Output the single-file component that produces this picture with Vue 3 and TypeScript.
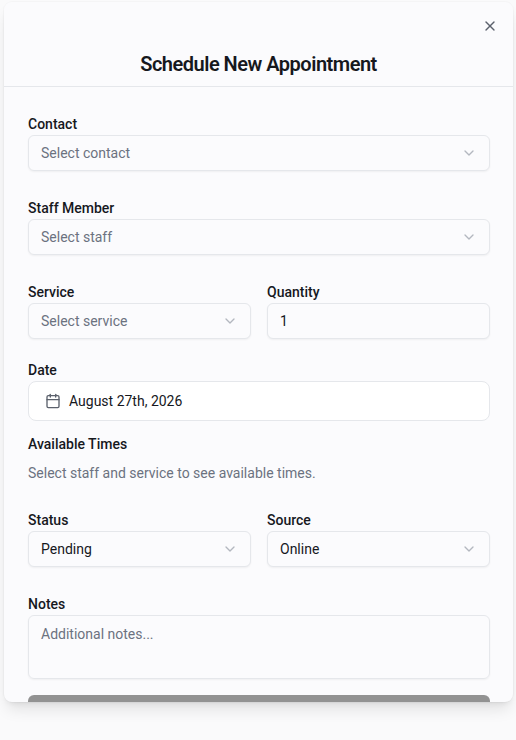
<script setup lang="ts">
interface Field { label: string; value: string; placeholder?: boolean; kind: 'select' | 'input' }
const row1: Field[] = [
  { label: 'Service', value: 'Select service', placeholder: true, kind: 'select' },
  { label: 'Quantity', value: '1', kind: 'input' },
]
const row2: Field[] = [
  { label: 'Status', value: 'Pending', kind: 'select' },
  { label: 'Source', value: 'Online', kind: 'select' },
]
const single: Field[] = [
  { label: 'Contact', value: 'Select contact', placeholder: true, kind: 'select' },
  { label: 'Staff Member', value: 'Select staff', placeholder: true, kind: 'select' },
]
</script>

<template>
  <div class="page">
    <div class="modal">
      <header class="head">
        <button class="close" aria-label="Close">
          <svg width="16" height="16" viewBox="0 0 24 24" fill="none" stroke="currentColor" stroke-width="2" stroke-linecap="round" stroke-linejoin="round"><path d="M18 6 6 18" /><path d="m6 6 12 12" /></svg>
        </button>
        <h2>Schedule New Appointment</h2>
      </header>
      <div class="body">
        <div v-for="f in single" :key="f.label" class="field block">
          <label>{{ f.label }}</label>
          <div class="control">
            <span :class="{ ph: f.placeholder }">{{ f.value }}</span>
            <svg class="chev" width="16" height="16" viewBox="0 0 24 24" fill="none" stroke="currentColor" stroke-width="2" stroke-linecap="round" stroke-linejoin="round"><path d="m6 9 6 6 6-6" /></svg>
          </div>
        </div>
        <div class="two block-tight">
          <div v-for="f in row1" :key="f.label" class="field">
            <label>{{ f.label }}</label>
            <div class="control">
              <span :class="{ ph: f.placeholder }">{{ f.value }}</span>
              <svg v-if="f.kind === 'select'" class="chev" width="16" height="16" viewBox="0 0 24 24" fill="none" stroke="currentColor" stroke-width="2" stroke-linecap="round" stroke-linejoin="round"><path d="m6 9 6 6 6-6" /></svg>
            </div>
          </div>
        </div>
        <div class="field date-field">
          <label>Date</label>
          <div class="date">
            <svg width="16" height="16" viewBox="0 0 24 24" fill="none" stroke="currentColor" stroke-width="2" stroke-linecap="round" stroke-linejoin="round"><path d="M8 2v4" /><path d="M16 2v4" /><rect x="3" y="4" width="18" height="18" rx="2" /><path d="M3 10h18" /></svg>
            <span>August 27th, 2026</span>
          </div>
        </div>
        <div class="times">
          <label>Available Times</label>
          <p>Select staff and service to see available times.</p>
        </div>
        <div class="two block">
          <div v-for="f in row2" :key="f.label" class="field">
            <label>{{ f.label }}</label>
            <div class="control">
              <span>{{ f.value }}</span>
              <svg class="chev" width="16" height="16" viewBox="0 0 24 24" fill="none" stroke="currentColor" stroke-width="2" stroke-linecap="round" stroke-linejoin="round"><path d="m6 9 6 6 6-6" /></svg>
            </div>
          </div>
        </div>
        <div class="field">
          <label>Notes</label>
          <div class="area ph">Additional notes...</div>
        </div>
        <div class="submit"></div>
      </div>
    </div>
  </div>
</template>

<style scoped>
.page {
  width: 516px;
  height: 740px;
  box-sizing: border-box;
  padding: 2px 3px 38px 4px;
  background: #fafafb;
  font-family: Roboto, "Liberation Sans", sans-serif;
  color: #111318;
  overflow: hidden;
}
.modal {
  height: 700px;
  display: flex;
  flex-direction: column;
  background: #fbfbfd;
  border-radius: 8px;
  overflow: hidden;
  box-shadow: 0 10px 15px -3px rgba(0, 0, 0, 0.1), 0 4px 6px -4px rgba(0, 0, 0, 0.1), 0 0 0 1px rgba(0, 0, 0, 0.02);
}
.head {
  height: 84px;
  flex: none;
  border-bottom: 1px solid #e5e7eb;
  display: flex;
  flex-direction: column;
  align-items: center;
  position: relative;
}
.close {
  position: absolute;
  top: 16px;
  right: 15px;
  width: 16px;
  height: 16px;
  padding: 0;
  border: 0;
  background: none;
  color: #5b616c;
}
h2 {
  margin: 48px 0 0;
  font-size: 20px;
  line-height: 28px;
  font-weight: 600;
  letter-spacing: -0.5px;
  color: #16181d;
}
.body {
  flex: 1;
  min-height: 0;
  padding: 27px 23px 0 24px;
  overflow: hidden;
  display: flex;
  flex-direction: column;
}
.field {
  display: flex;
  flex-direction: column;
  min-width: 0;
}
.block { margin-bottom: 27px; }
.block-tight { margin-bottom: 21px; }
label {
  display: block;
  font-size: 14px;
  line-height: 20px;
  font-weight: 500;
  margin-bottom: 1px;
  color: #16181d;
}
.control {
  height: 36px;
  box-sizing: border-box;
  border: 1px solid #e5e7eb;
  border-radius: 6px;
  padding: 0 12px;
  display: flex;
  align-items: center;
  justify-content: space-between;
  font-size: 14px;
  color: #16181d;
  background: #fbfbfd;
  box-shadow: 0 1px 2px rgba(0, 0, 0, 0.05);
}
.ph { color: #6b7280; }
.chev { color: #b3b7bf; flex: none; }
.two {
  display: grid;
  grid-template-columns: 1fr 1fr;
  gap: 16px;
}
.date-field { margin-bottom: 13px; }
.date {
  height: 40px;
  box-sizing: border-box;
  border: 1px solid #e5e7eb;
  border-radius: 8px;
  background: #fff;
  padding: 0 16px;
  display: flex;
  align-items: center;
  gap: 8px;
  font-size: 14px;
  color: #16181d;
}
.date svg { color: #5b616c; flex: none; }
.times { margin-bottom: 27px; }
.times label { margin-bottom: 9px; }
.times p {
  margin: 0;
  font-size: 14px;
  line-height: 20px;
  color: #6b7280;
}
.area {
  height: 64px;
  flex: none;
  box-sizing: border-box;
  border: 1px solid #e5e7eb;
  border-radius: 6px;
  padding: 8px 12px;
  font-size: 14px;
  line-height: 20px;
  box-shadow: 0 1px 2px rgba(0, 0, 0, 0.05);
}
.submit {
  flex: none;
  height: 40px;
  margin-top: 16px;
  border-radius: 6px;
  background: #929292;
}
</style>

<style>
body { margin: 0; }
</style>
